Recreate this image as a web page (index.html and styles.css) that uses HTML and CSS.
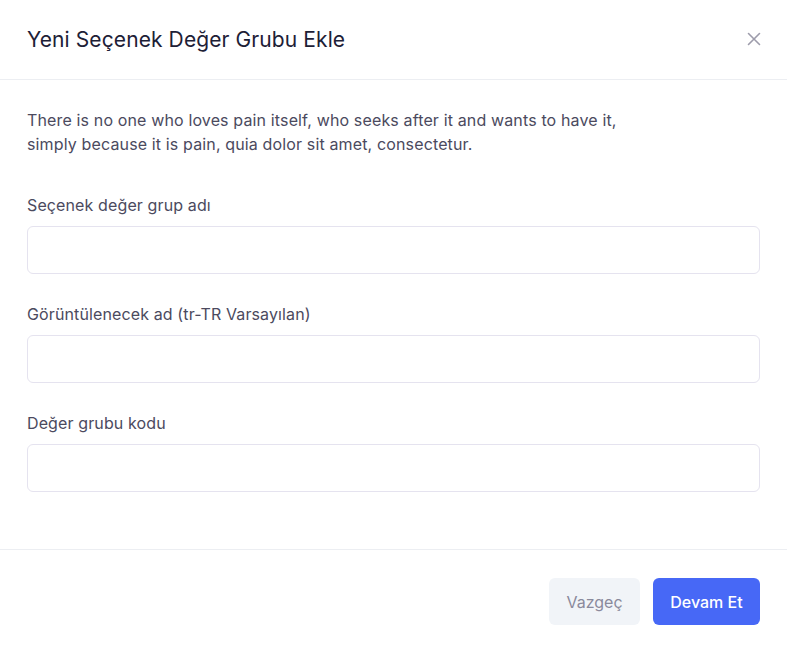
FILE: index.html
```html
<!DOCTYPE html>
<html lang="tr">
<head>
<meta charset="utf-8">
<link rel="stylesheet" href="styles.css">
</head>
<body>
<div class="modal">
  <header class="modal-header">
    <h1 class="modal-title">Yeni Seçenek Değer Grubu Ekle</h1>
    <button class="close-btn" aria-label="Kapat">
      <svg width="14" height="14" viewBox="0 0 14 14"><path d="M1.5 1.5L12.5 12.5M12.5 1.5L1.5 12.5" stroke="#9d9cab" stroke-width="1.6" stroke-linecap="round"/></svg>
    </button>
  </header>
  <div class="modal-body">
    <p class="desc">There is no one who loves pain itself, who seeks after it and wants to have it,<br>simply because it is pain, quia dolor sit amet, consectetur.</p>
    <div class="field">
      <label class="field-label">Seçenek değer grup adı</label>
      <input class="field-input" type="text">
    </div>
    <div class="field">
      <label class="field-label">Görüntülenecek ad (tr-TR Varsayılan)</label>
      <input class="field-input" type="text">
    </div>
    <div class="field">
      <label class="field-label">Değer grubu kodu</label>
      <input class="field-input" type="text">
    </div>
  </div>
  <footer class="modal-footer">
    <button class="btn btn-light">Vazgeç</button>
    <button class="btn btn-primary">Devam Et</button>
  </footer>
</div>
</body>
</html>
```

FILE: styles.css
```css
* { box-sizing: border-box; }
html, body { margin: 0; padding: 0; background: #ffffff; }
body { font-family: Inter, "Noto Sans", sans-serif; }

.modal {
  width: 787px;
  height: 651px;
  background: #fff;
  display: flex;
  flex-direction: column;
}

.modal-header {
  height: 80px;
  border-bottom: 1px solid #eceef2;
  display: flex;
  align-items: center;
  justify-content: space-between;
  padding: 0 26px 1px 27px;
}

.modal-title {
  margin: 0;
  font-size: 21px;
  font-weight: 400;
  color: #1d2036;
  letter-spacing: 0.1px;
}

.close-btn {
  border: 0;
  background: transparent;
  padding: 0;
  width: 14px;
  height: 14px;
  display: flex;
  cursor: pointer;
}

.modal-body {
  padding: 28px 27px 0 27px;
  height: 470px;
  border-bottom: 1px solid #eceef2;
}

.desc {
  margin: 0 0 37px 0;
  font-size: 16px;
  line-height: 24px;
  color: #4b4a5e;
  letter-spacing: 0.14px;
}

.field { display: flex; flex-direction: column; }
.field + .field { margin-top: 28px; }

.field-label {
  font-size: 16px;
  line-height: 24px;
  color: #4b4a5e;
  margin-bottom: 9px;
  letter-spacing: 0.12px;
}

.field-input {
  height: 48px;
  width: 733px;
  border: 1px solid #e5e3ef;
  border-radius: 6px;
  background: #fff;
  font-family: inherit;
  font-size: 15px;
  padding: 0 14px;
  outline: none;
}

.modal-footer {
  flex: 1;
  display: flex;
  justify-content: flex-end;
  align-items: flex-start;
  gap: 13px;
  padding: 28px 27px 0 27px;
}

.btn {
  height: 47px;
  border: 0;
  border-radius: 6px;
  font-family: inherit;
  font-size: 16px;
  cursor: pointer;
}

.btn-light {
  width: 91px;
  background: #f1f4f8;
  color: #8a8a9c;
}

.btn-primary {
  width: 107px;
  background: #4768f6;
  color: #fff;
  font-weight: 500;
}
```
